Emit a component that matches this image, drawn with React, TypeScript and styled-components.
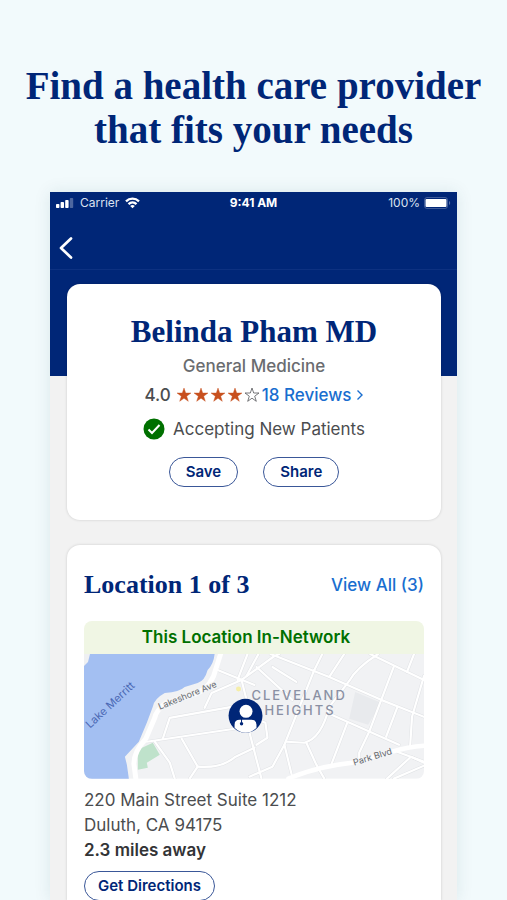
import React from "react";
import styled, { createGlobalStyle } from "styled-components";

const navy = "#002677";
const linkBlue = "#196ecf";
const sans = `Inter, "Liberation Sans", sans-serif`;
const serif = `"Liberation Serif", "Times New Roman", serif`;

const GlobalStyle = createGlobalStyle`
  *, *::before, *::after { box-sizing: border-box; }
  html, body { margin: 0; background: #f2fafc; }
  body { font-family: ${sans}; color: #4b4d4f; -webkit-font-smoothing: antialiased; }
  h1, h2, h3, p { margin: 0; }
  a { text-decoration: none; }
`;

const Page = styled.div`
  display: flex;
  flex-direction: column;
  min-height: 100vh;
  padding: 64px 50px 0;
`;

const Headline = styled.h1`
  margin: 0 -50px 40px;
  color: ${navy};
  font: 700 39px/44px ${serif};
  text-align: center;
`;

const Phone = styled.main`
  display: flex;
  flex: 1;
  flex-direction: column;
  background: linear-gradient(${navy} 184px, #f2f2f2 184px);
  box-shadow: 0 0 16px rgba(0, 70, 80, 0.1);
`;

const TopBar = styled.header`
  height: 78px;
  border-bottom: 1px solid #0d3181;
`;

const StatusBar = styled.div`
  display: grid;
  grid-template-columns: 1fr auto 1fr;
  align-items: center;
  height: 22px;
  padding: 0 6px;
  color: #fff;
  font-size: 12px;
  line-height: 20px;
`;

const StatusGroup = styled.div<{ $end?: boolean }>`
  display: flex;
  align-items: center;
  justify-content: ${(p) => (p.$end ? "flex-end" : "flex-start")};
  gap: ${(p) => (p.$end ? 4 : 6)}px;
  color: #dbe2f0;
`;

const BackButton = styled.button`
  display: block;
  margin: 20px 0 0 6px;
  padding: 2px;
  border: 0;
  background: none;
  line-height: 0;
`;

const Cards = styled.div`
  display: flex;
  flex: 1;
  flex-direction: column;
  gap: 25px;
  padding: 14px 16px 0 17px;
`;

const Card = styled.section<{ $last?: boolean }>`
  flex: ${(p) => (p.$last ? 1 : "none")};
  padding: ${(p) => (p.$last ? "24px 17px 0" : "30px 17px 33px")};
  border-radius: ${(p) => (p.$last ? "13px 13px 0 0" : "13px")};
  background: #fff;
  box-shadow: 0 0 3px rgba(0, 0, 0, 0.16);
`;

const ProviderCard = styled(Card)`
  display: flex;
  flex-direction: column;
  align-items: center;
`;

const ProviderName = styled.h2`
  color: ${navy};
  font: 700 31px/36px ${serif};
`;

const Specialty = styled.p`
  margin-top: 4px;
  color: #6a6c6f;
  font-size: 17px;
  font-weight: 500;
  line-height: 24px;
`;

const Rating = styled.div`
  display: flex;
  align-items: center;
  margin-top: 5px;
  font-size: 17px;
  font-weight: 500;
  line-height: 24px;
`;

const Stars = styled.span`
  display: flex;
  gap: 1px;
  margin: 0 2px 0 5px;
`;

const TextLink = styled.a`
  display: inline-flex;
  align-items: center;
  gap: 4px;
  color: ${linkBlue};
  font-size: 17px;
  font-weight: 500;
  line-height: 24px;
`;

const Accepting = styled.p`
  display: flex;
  align-items: center;
  gap: 8px;
  margin-top: 10px;
  font-size: 17px;
  line-height: 24px;
`;

const Actions = styled.div`
  display: flex;
  gap: 25px;
  margin-top: 16px;
`;

const PillButton = styled.button<{ $compact?: boolean }>`
  height: 30px;
  padding: 0 ${(p) => (p.$compact ? 13 : 16)}px;
  border: 1px solid #3a5798;
  border-radius: 15px;
  background: #fff;
  color: ${navy};
  font: 600 15px/20px ${sans};
`;

const LocationHead = styled.div`
  display: flex;
  align-items: center;
  justify-content: space-between;
`;

const LocationTitle = styled.h2`
  color: ${navy};
  font: 700 26px/32px ${serif};
`;

const NetworkPanel = styled.div`
  overflow: hidden;
  margin-top: 20px;
  border-radius: 8px;
`;

const NetworkBanner = styled.p`
  padding: 5px 21px 5px 5px;
  background: #f0f6e4;
  color: #007000;
  font-size: 17px;
  font-weight: 600;
  line-height: 23px;
  text-align: center;
`;

const MapDrawing = styled.svg`
  display: block;
  width: 100%;
  height: auto;
  font-family: ${sans};
`;

const Address = styled.address`
  margin: 9px 0 8px;
  color: #4b4d4f;
  font-size: 17px;
  font-style: normal;
  line-height: 25px;
`;

const Distance = styled.strong`
  display: block;
  color: #333436;
  font-weight: 600;
`;

function SignalIcon() {
  return (
    <svg width="18" height="12" viewBox="0 0 18 12" fill="#fff" aria-hidden="true">
      <rect x="0" y="7" width="3.4" height="4" rx="0.8" />
      <rect x="4.6" y="5" width="3.4" height="6" rx="0.8" />
      <rect x="9.2" y="3" width="3.4" height="8" rx="0.8" />
      <rect x="13.8" y="1" width="3.4" height="10" rx="0.8" opacity="0.3" />
    </svg>
  );
}

function WifiIcon() {
  return (
    <svg width="15" height="12" viewBox="0 0 15 12" fill="none" stroke="#fff" strokeWidth="2.3" aria-hidden="true">
      <path d="M1 4.4C4.7 .8 10.3 .8 14 4.4" />
      <path d="M3.5 7.1c2.3-2.2 5.7-2.2 8 0" />
      <path d="M7.5 11.3 5.2 9c1.3-1.2 3.3-1.2 4.6 0Z" fill="#fff" stroke="none" />
    </svg>
  );
}

function BatteryIcon() {
  return (
    <svg width="27" height="12" viewBox="0 0 27 12" aria-hidden="true">
      <rect x="0.5" y="0.5" width="23" height="11" rx="2.5" fill="none" stroke="#fff" opacity="0.25" />
      <rect x="1.5" y="2" width="21" height="8" rx="1" fill="#fff" />
      <path d="M25 4v4c1.6-.7 1.6-3.3 0-4Z" fill="#fff" opacity="0.35" />
    </svg>
  );
}

function Star({ filled }: { filled: boolean }) {
  return (
    <svg width="16" height="16" viewBox="0 0 16 16" aria-hidden="true">
      <path
        d="m8 1 1.7 5h5.3l-4.300 3.200 1.600 5.100L8 11.200 3.700 14.300l1.600-5.100L1 6h5.300Z"
        fill={filled ? "#c8501e" : "none"}
        stroke={filled ? "#c8501e" : "#55575a"}
        strokeWidth={filled ? 0.4 : 0.8}
      />
    </svg>
  );
}

const streets = [
  "M63 88 151 75 171 71",
  "M79 85 86 64 148 53",
  "M121 54 128 39 158 26 191 2 196 0",
  "M134 16 171 31",
  "M154 26 164 0",
  "M158 26 163 46",
  "M98 85 114 113 106 125",
  "M71 88 86 109 91 125",
  "M114 113Q138 115 152 103L171 94",
  "M187 0 246 23 298 46 341 63",
  "M231 16 239 0",
  "M246 23 261 0",
  "M295 0Q273 14 266 27L246 53Q238 85 221 89L203 88",
  "M287 0 341 26",
  "M311 12 286 78 276 99V106",
  "M324 18 331 0",
  "M341 22 329 63 327 94",
  "M314 54 303 83",
  "M246 60 316 91",
  "M264 69 248 111",
  "M231 16 201 91 189 113 166 123",
  "M173 13 209 46",
  "M189 13 213 28",
  "M201 91 209 124",
  "M223 89 233 111 241 125",
  "M166 79 178 125",
  "M166 63 182 69 184 84 173 91",
  "M304 125 328 103 341 109",
  "M314 98 341 108",
  "M311 125 341 112",
  "M175 0 163 22",
];

function LocationMap() {
  return (
    <MapDrawing viewBox="0 0 341 125" role="img" aria-label="Map of Cleveland Heights">
      <rect width="341" height="125" fill="#f1f2f4" />
      <path d="M0 0H131Q130 10 124 16 121 27 114 29L101 33Q96 38 81 39 70 45 69 53L63 69 55 88 41 103 43 111 45 125H0Z" fill="#a3bff2" />
      <path d="M0 0H6L4 8 0 12Z" fill="#eff0f2" />
      <path d="M54 96 69 89 76 101 63 109 64 114 54 116Z" fill="#bfe2cb" />
      <path d="M272 38 298 49 285 71 266 65Z" fill="#e8eaed" />
      <g fill="none" strokeLinecap="round" strokeLinejoin="round">
        <g stroke="#e0e2e5" strokeWidth="3.2">
          {streets.map((d) => <path key={d} d={d} />)}
        </g>
        <g stroke="#fff" strokeWidth="2.2">
          {streets.map((d) => <path key={d} d={d} />)}
        </g>
        <path d="M137 0 130 22Q123 38 106 42L82 49Q72 57 71 64L62 85Q50 98 50 110L52 125" stroke="#fff" strokeWidth="5" />
        <path d="M205 125Q233 113 269 109L309 98Q325 93 341 92" stroke="#fff" strokeWidth="4.5" />
      </g>
      <circle cx="155" cy="35" r="2.5" fill="#f5eea8" />
      <text transform="translate(6 75) rotate(-43)" fontSize="11" fill="#4a68b4">Lake Merritt</text>
      <g fill="#66696e" stroke="#f4f5f6" strokeWidth="2" paintOrder="stroke" fontSize="9">
        <text transform="translate(76 56) rotate(-22)">Lakeshore Ave</text>
        <text transform="translate(271 112) rotate(-17)">Park Blvd</text>
      </g>
      <g fill="#8a90a3" fontSize="13" fontWeight="500" letterSpacing="2">
        <text x="168" y="46">CLEVELAND</text>
        <text x="181" y="61">HEIGHTS</text>
      </g>
      <circle cx="162" cy="62" r="17" fill={navy} />
      <circle cx="162.500" cy="57.500" r="6.500" fill="#fff" />
      <path d="M151 74v-3q0-5 5-5h12q5 0 5 5v3Q168 79 162 79T151 74Z" fill="#fff" />
      <path d="M158 65v4" stroke={navy} strokeWidth="1" />
      <circle cx="158" cy="70" r="1.700" fill={navy} />
    </MapDrawing>
  );
}

export default function App() {
  return (
    <>
      <GlobalStyle />
      <Page>
        <Headline>
          Find a health care provider
          <br />
          that fits your needs
        </Headline>
        <Phone>
          <TopBar>
            <StatusBar>
              <StatusGroup>
                <SignalIcon />
                <span>Carrier</span>
                <WifiIcon />
              </StatusGroup>
              <strong>9:41 AM</strong>
              <StatusGroup $end>
                <span>100%</span>
                <BatteryIcon />
              </StatusGroup>
            </StatusBar>
            <BackButton type="button" aria-label="Back">
              <svg width="16" height="24" viewBox="0 0 16 24" fill="none" stroke="#fff" strokeWidth="2.7" strokeLinecap="round" strokeLinejoin="round" aria-hidden="true">
                <path d="M13 2.500 3 12 13 21.500" />
              </svg>
            </BackButton>
          </TopBar>
          <Cards>
            <ProviderCard>
              <ProviderName>Belinda Pham MD</ProviderName>
              <Specialty>General Medicine</Specialty>
              <Rating>
                <span>4.0</span>
                <Stars role="img" aria-label="4 out of 5 stars">
                  {[1, 2, 3, 4, 5].map((n) => <Star key={n} filled={n <= 4} />)}
                </Stars>
                <TextLink href="#reviews">
                  18 Reviews
                  <svg width="8" height="12" viewBox="0 0 8 12" fill="none" stroke="currentColor" strokeWidth="1.4" aria-hidden="true">
                    <path d="m1.500 1.500 4.500 4.500-4.500 4.500" />
                  </svg>
                </TextLink>
              </Rating>
              <Accepting>
                <svg width="22" height="22" viewBox="0 0 22 22" aria-hidden="true">
                  <circle cx="11" cy="11" r="10.500" fill="#007000" />
                  <path d="m5.500 11.500 3.500 3.500 7.500-8" fill="none" stroke="#fff" strokeWidth="2" />
                </svg>
                Accepting New Patients
              </Accepting>
              <Actions>
                <PillButton type="button">Save</PillButton>
                <PillButton type="button">Share</PillButton>
              </Actions>
            </ProviderCard>
            <Card $last>
              <LocationHead>
                <LocationTitle>Location 1 of 3</LocationTitle>
                <TextLink href="#locations">View All (3)</TextLink>
              </LocationHead>
              <NetworkPanel>
                <NetworkBanner>This Location In-Network</NetworkBanner>
                <LocationMap />
              </NetworkPanel>
              <Address>
                220 Main Street Suite 1212
                <br />
                Duluth, CA 94175
                <Distance>2.3 miles away</Distance>
              </Address>
              <PillButton type="button" $compact>Get Directions</PillButton>
            </Card>
          </Cards>
        </Phone>
      </Page>
    </>
  );
}
